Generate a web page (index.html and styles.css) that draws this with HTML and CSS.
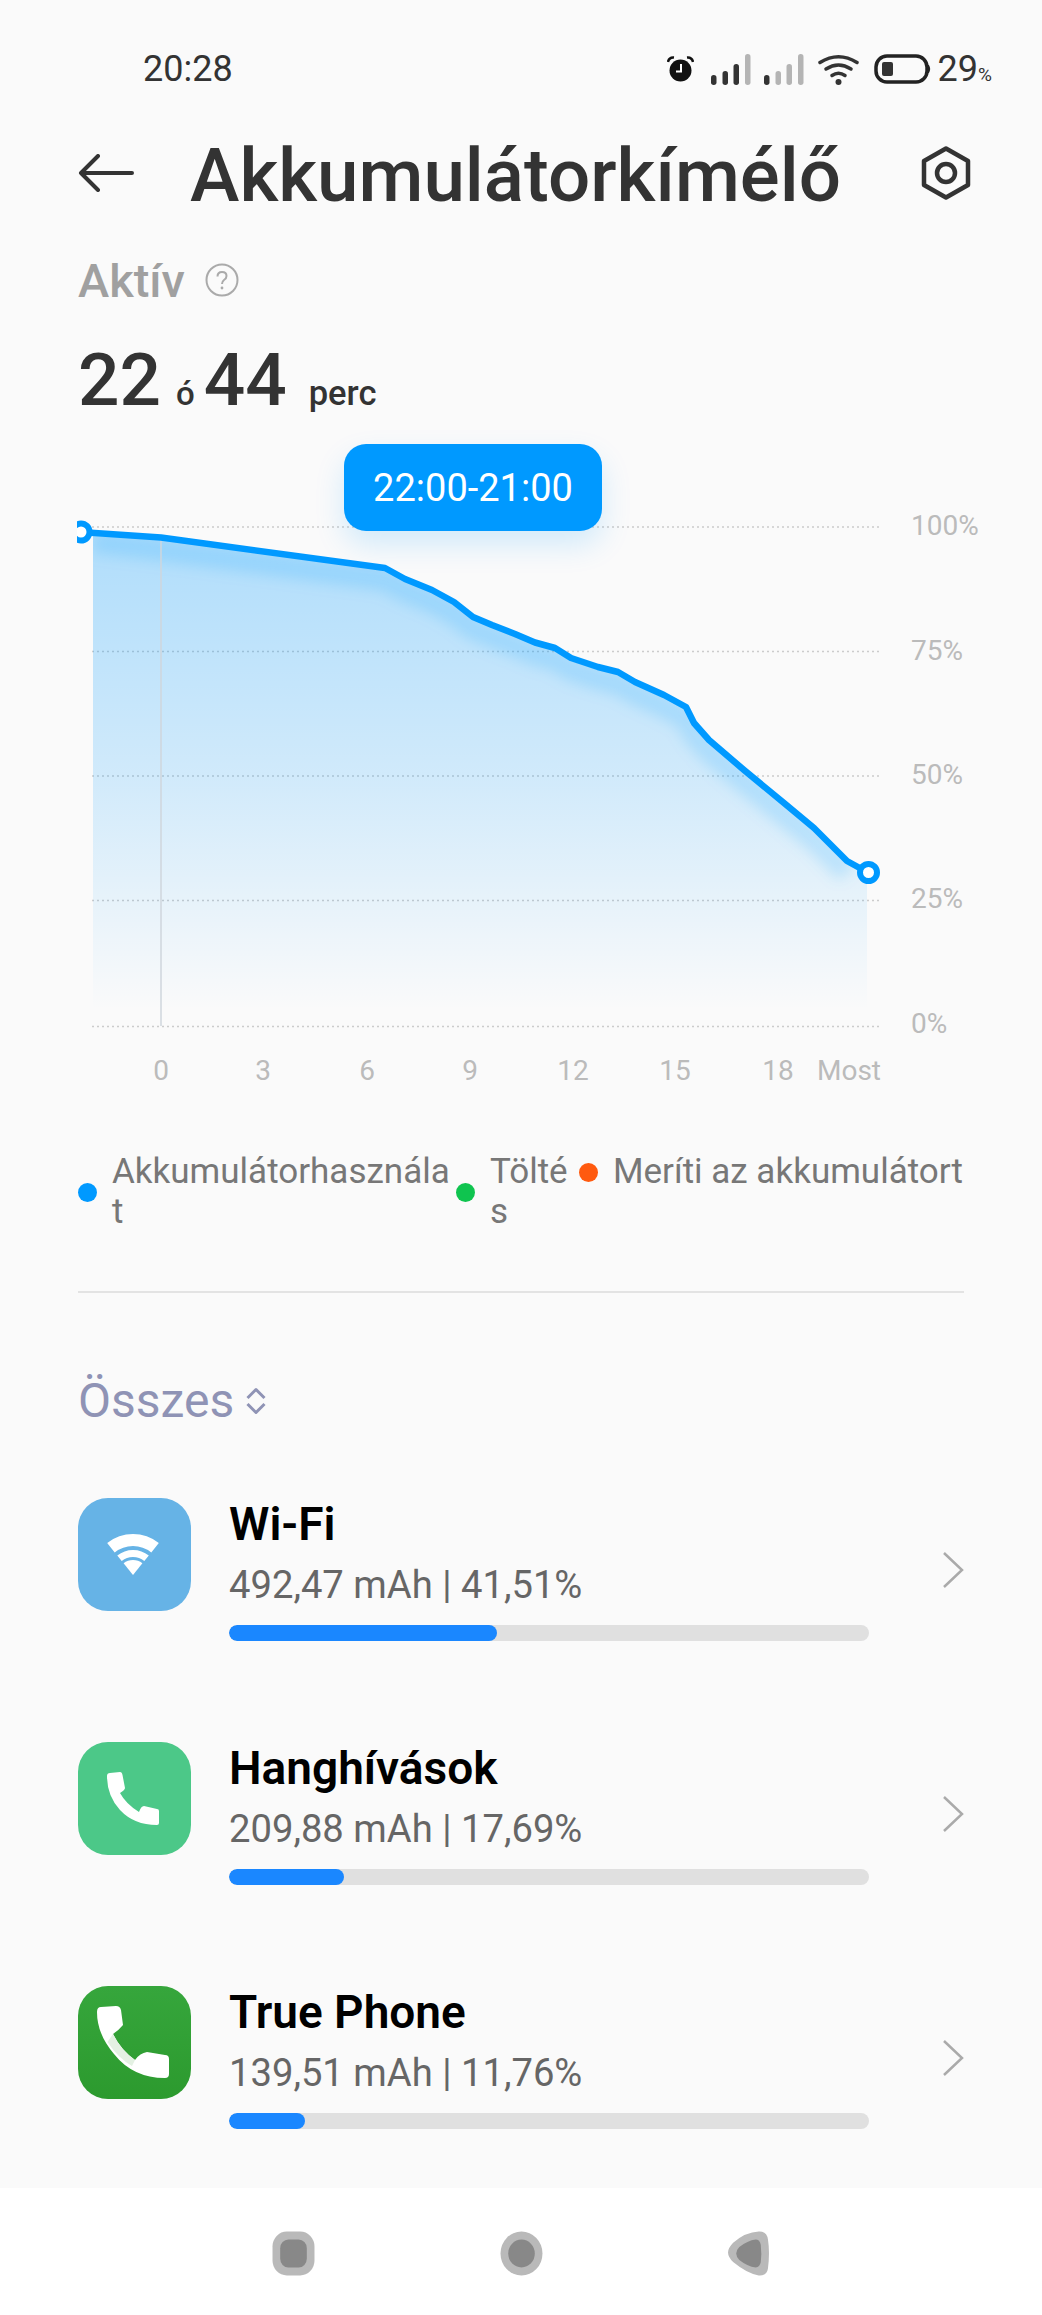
FILE: index.html
```html
<!DOCTYPE html>
<html lang="hu">
<head>
    <meta charset="UTF-8">
    <meta name="viewport" content="width=device-width, initial-scale=1.0">
    <title>Akkumulátorkímélő</title>
    <link rel="stylesheet" href="styles.css">
</head>
<body>

<div class="statusbar">
    <span class="clock">20:28</span>
    <div class="status-icons">
        <svg class="ic-alarm" width="27" height="26" viewBox="0 0 27 26">
            <circle cx="13.5" cy="14.5" r="11" fill="#111"/>
            <path d="M14 8v7.5H9" fill="none" stroke="#fff" stroke-width="2"/>
            <path d="M1 6Q2 1 7 1.500M26 6Q25 1 20 1.500" fill="none" stroke="#111" stroke-width="2.500"/>
        </svg>
        <svg class="ic-signal" width="40" height="31" viewBox="0 0 40 31">
            <rect x="0" y="21" width="5.500" height="10" rx="2.700" fill="#333"/>
            <rect x="11.500" y="17" width="5.500" height="14" rx="2.700" fill="#333"/>
            <rect x="22.500" y="10" width="5.500" height="21" rx="2.700" fill="#333"/>
            <rect x="34" y="0" width="5.500" height="31" rx="2.700" fill="#b4b4b4"/>
        </svg>
        <svg class="ic-signal" width="40" height="31" viewBox="0 0 40 31">
            <rect x="0" y="21" width="5.500" height="10" rx="2.700" fill="#333"/>
            <rect x="11.500" y="17" width="5.500" height="14" rx="2.700" fill="#b4b4b4"/>
            <rect x="22.500" y="10" width="5.500" height="21" rx="2.700" fill="#b4b4b4"/>
            <rect x="34" y="0" width="5.500" height="31" rx="2.700" fill="#b4b4b4"/>
        </svg>
        <svg class="ic-wifi" width="41" height="31" viewBox="0 0 41 31">
            <g fill="none" stroke="#333" stroke-width="3.500" stroke-linecap="round">
                <path d="M2 8.500Q20.500 -3 39 8.500"/>
                <path d="M8 15Q20.500 7 33 15"/>
                <path d="M14 21.500Q20.500 17 27 21.500"/>
            </g>
            <circle cx="20.500" cy="28" r="3" fill="#333"/>
        </svg>
        <svg class="ic-battery" width="58" height="30" viewBox="0 0 58 30">
            <rect x="2" y="2" width="51" height="26" rx="11" fill="none" stroke="#222" stroke-width="3.500"/>
            <rect x="8" y="8" width="11" height="14" rx="2" fill="#333"/>
            <path d="M54.500 11Q57 15 54.500 19Z" fill="#222" stroke="#222"/>
        </svg>
        <span class="batt-text">29<small>%</small></span>
    </div>
</div>

<div class="titlebar">
    <svg class="back" width="56" height="38" viewBox="0 0 56 38">
        <path d="M54 19H3M20 2L3 19L20 36" fill="none" stroke="#333" stroke-width="4" stroke-linecap="round" stroke-linejoin="round"/>
    </svg>
    <h1>Akkumulátorkímélő</h1>
    <svg class="gear" width="50" height="54" viewBox="0 0 50 54">
        <path d="M25 2.500L47 15V39L25 51.500L3 39V15Z" fill="none" stroke="#333" stroke-width="4.500" stroke-linejoin="round"/>
        <circle cx="25" cy="27" r="9" fill="none" stroke="#333" stroke-width="4.500"/>
    </svg>
</div>

<div class="active-row">
    <span class="active-label">Aktív</span>
    <svg width="34" height="34" viewBox="0 0 34 34">
        <circle cx="17" cy="17" r="15.500" fill="none" stroke="#aaa" stroke-width="2"/>
        <path d="M12.500 13.500Q12.500 9 17 9Q21.500 9 21.500 13Q21.500 15.500 19 17Q17 18.500 17 21" fill="none" stroke="#aaa" stroke-width="2"/>
        <circle cx="17" cy="25" r="1.400" fill="#aaa"/>
    </svg>
</div>

<div class="duration">
    <span class="big">22</span><span class="unit unit-h">ó</span><span class="big">44</span><span class="unit unit-m">perc</span>
</div>

<div class="chart">
    <svg class="chart-svg" width="1042" height="660" viewBox="0 430 1042 660">
        <defs>
            <linearGradient id="areaFill" x1="0" y1="530" x2="0" y2="1010" gradientUnits="userSpaceOnUse">
                <stop offset="0" stop-color="#0099ff" stop-opacity="0.30"/>
                <stop offset="0.5" stop-color="#0099ff" stop-opacity="0.17"/>
                <stop offset="1" stop-color="#0099ff" stop-opacity="0"/>
            </linearGradient>
            <clipPath id="areaClip">
                <path d="M93 532L161 537.500L385 568L405 579L432 590L454 602L473 617L492 625L515 634L535 642.500L555 648L571 658L598 667L618 672L635 682L664 695L686 707L694 723L709 740L744 770L784 803L814 828L847 861L867 872V1010H93Z"/>
            </clipPath>
            <clipPath id="dotClip">
                <rect x="77" y="430" width="900" height="660"/>
            </clipPath>
            <filter id="soft" x="-10%" y="-10%" width="120%" height="120%">
                <feGaussianBlur stdDeviation="7"/>
            </filter>
        </defs>
        <g class="grid">
            <path d="M92 527H882"/>
            <path d="M92 651.500H882"/>
            <path d="M92 776H882"/>
            <path d="M92 900.500H882"/>
            <path d="M92 1026.500H882"/>
        </g>
        <path d="M93 532L161 537.500L385 568L405 579L432 590L454 602L473 617L492 625L515 634L535 642.500L555 648L571 658L598 667L618 672L635 682L664 695L686 707L694 723L709 740L744 770L784 803L814 828L847 861L867 872V1010H93Z" fill="url(#areaFill)"/>
        <g clip-path="url(#areaClip)">
            <path d="M93 542L161 550L385 580L405 591L432 602L454 614L473 629L492 637L515 646L535 654.500L555 660L571 670L598 679L618 684L635 694L664 707L686 719L694 735L709 752L744 782L784 815L814 840L847 873" fill="none" stroke="#0099ff" stroke-opacity="0.16" stroke-width="22" filter="url(#soft)"/>
        </g>
        <path d="M161 537V1026" stroke="#cfd6dc" stroke-width="1.500"/>
        <path d="M80 532L161 537.500L385 568L405 579L432 590L454 602L473 617L492 625L515 634L535 642.500L555 648L571 658L598 667L618 672L635 682L664 695L686 707L694 723L709 740L744 770L784 803L814 828L847 861L867 872" fill="none" stroke="#0099ff" stroke-width="6.500" stroke-linejoin="round"/>
        <g clip-path="url(#dotClip)">
            <circle cx="81" cy="532" r="8.500" fill="#fff" stroke="#0099ff" stroke-width="6"/>
        </g>
        <circle cx="868.500" cy="872.500" r="8.500" fill="#fff" stroke="#0099ff" stroke-width="6"/>
        <g class="y-labels">
            <text x="911" y="535">100%</text>
            <text x="911" y="660">75%</text>
            <text x="911" y="784">50%</text>
            <text x="911" y="908">25%</text>
            <text x="911" y="1033">0%</text>
        </g>
        <g class="x-labels">
            <text x="161" y="1080">0</text>
            <text x="263" y="1080">3</text>
            <text x="367" y="1080">6</text>
            <text x="470" y="1080">9</text>
            <text x="573" y="1080">12</text>
            <text x="675" y="1080">15</text>
            <text x="778" y="1080">18</text>
            <text x="849" y="1080">Most</text>
        </g>
    </svg>
    <div class="tooltip">22:00-21:00</div>
</div>

<div class="legend">
    <div class="legend-item item-use"><i class="dot blue"></i><span>Akkumulátorhasználat</span></div>
    <div class="legend-item item-charge"><i class="dot green"></i><span>Töltés</span></div>
    <div class="legend-item item-drain"><i class="dot orange"></i><span>Meríti az akkumulátort</span></div>
</div>

<div class="divider"></div>

<div class="filter">
    <span>Összes</span>
    <svg width="20" height="28" viewBox="0 0 20 28">
        <path d="M1.500 11L10 2.500L18.500 11M1.500 17L10 25.500L18.500 17" fill="none" stroke="#8f93b5" stroke-width="3" stroke-linejoin="round"/>
    </svg>
</div>

<div class="list">
    <div class="row">
        <div class="app-icon icon-wifi">
            <svg width="113" height="113" viewBox="0 0 113 113" fill="#fff">
                <path d="M29.200 45.100A41 41 0 0 1 80.800 45.100L73.300 54.500A29 29 0 0 0 36.700 54.500Z"/>
                <path d="M39.300 57.600A25 25 0 0 1 70.800 57.600L66.300 63A18 18 0 0 0 43.700 63Z"/>
                <path d="M45.600 65.300A15 15 0 0 1 64.400 65.300L55 77Z"/>
            </svg>
        </div>
        <div class="row-body">
            <div class="row-title">Wi-Fi</div>
            <div class="row-sub">492,47 mAh | 41,51%</div>
            <div class="bar"><div class="bar-fill" style="width: 268px"></div></div>
        </div>
        <svg class="chev" width="22" height="36" viewBox="0 0 22 36"><path d="M2 1L20 18L2 35" fill="none" stroke="#aaa" stroke-width="2.500"/></svg>
    </div>
    <div class="row">
        <div class="app-icon icon-voice">
            <svg width="113" height="113" viewBox="0 0 113 113" fill="#fff">
                <path d="M29 34Q29 31 32 31L42 30Q44 30 44.500 33L47 46Q47 48 42 51Q48 62 61 70Q63 64 66 64L79 67Q81 67 81 69L81 81Q81 83 79 83Q56 83 42 68Q29 54 29 34Z"/>
            </svg>
        </div>
        <div class="row-body">
            <div class="row-title">Hanghívások</div>
            <div class="row-sub">209,88 mAh | 17,69%</div>
            <div class="bar"><div class="bar-fill" style="width: 115px"></div></div>
        </div>
        <svg class="chev" width="22" height="36" viewBox="0 0 22 36"><path d="M2 1L20 18L2 35" fill="none" stroke="#aaa" stroke-width="2.500"/></svg>
    </div>
    <div class="row">
        <div class="app-icon icon-phone">
            <svg width="113" height="113" viewBox="0 0 113 113">
                <path fill="#fff" d="M19 26Q19 21 23 21L38 20Q42 20 43 24L45 39Q40 45 35 48Q43 64 57 74Q62 67 69 66L87 69Q91 69 91 73L91 88Q91 92 87 92Q55 92 36 68Q19 48 19 26Z"/>
                <path fill="#e4f1e3" d="M29.500 56L35 48Q43 64 57 74L54 80Q40 72 29.500 56Z"/>
            </svg>
        </div>
        <div class="row-body">
            <div class="row-title">True Phone</div>
            <div class="row-sub">139,51 mAh | 11,76%</div>
            <div class="bar"><div class="bar-fill" style="width: 76px"></div></div>
        </div>
        <svg class="chev" width="22" height="36" viewBox="0 0 22 36"><path d="M2 1L20 18L2 35" fill="none" stroke="#aaa" stroke-width="2.500"/></svg>
    </div>
</div>

<div class="navbar">
    <svg width="43" height="45" viewBox="0 0 42 42" preserveAspectRatio="none">
        <rect x="0.500" y="0.500" width="41" height="41" rx="14" fill="#b9b9b9"/>
        <rect x="8" y="8" width="26" height="26" rx="8" fill="#888"/>
    </svg>
    <svg width="43" height="45" viewBox="0 0 42 42" preserveAspectRatio="none">
        <circle cx="21" cy="21" r="20.500" fill="#b9b9b9"/>
        <circle cx="21" cy="21" r="13" fill="#888"/>
    </svg>
    <svg width="43" height="45" viewBox="0 0 42 42" preserveAspectRatio="none">
        <path d="M1 20Q1 16 6 11Q18 1 31 0.500Q39 0 40 8Q42 20 40 35Q39 42 31 41.500Q20 40 6 29Q1 24 1 20Z" fill="#b9b9b9"/>
        <path d="M9 21Q9 18 12 15Q20 9 28 8Q32 8 33 13Q34 21 33 29Q32 34 28 34Q20 33 12 27Q9 24 9 21Z" fill="#888"/>
    </svg>
</div>

</body>
</html>
```

FILE: styles.css
```css
body {
    font-family: Roboto, "Noto Sans", sans-serif;
    background-color: #fafafa;
    color: #333;
    margin: 0;
    padding: 0;
    width: 1042px;
    height: 2315px;
    overflow: hidden;
    display: flex;
    flex-direction: column;
}
.statusbar {
    height: 52px;
    margin-top: 43px;
    padding: 0 50px 0 143px;
    display: flex;
    justify-content: space-between;
    align-items: center;
}
.clock {
    font-size: 36px;
}
.status-icons {
    display: flex;
    align-items: center;
}
.ic-alarm {
    margin-right: 17px;
}
.ic-signal {
    margin-right: 13px;
}
.ic-wifi {
    margin-left: 1px;
    margin-right: 15px;
}
.ic-battery {
    margin-right: 6px;
}
.batt-text {
    font-size: 36px;
}
.batt-text small {
    font-size: 19px;
}
.titlebar {
    height: 100px;
    margin-top: 28px;
    padding: 0 71px 0 78px;
    display: flex;
    align-items: center;
}
.titlebar h1 {
    flex: 1;
    margin: 4px 0 0 56px;
    font-size: 74.500px;
    font-weight: 500;
    white-space: nowrap;
}
.active-row {
    height: 50px;
    margin-top: 32px;
    padding-left: 78px;
    display: flex;
    align-items: center;
    gap: 20px;
}
.active-label {
    font-size: 47px;
    font-weight: 500;
    color: #a0a0a0;
}
.duration {
    height: 80px;
    margin-top: 32px;
    padding-left: 78px;
    display: flex;
    align-items: baseline;
}
.big {
    font-size: 73px;
    font-weight: 500;
}
.unit {
    font-weight: 500;
}
.unit-h {
    font-size: 33px;
    margin: 0 9px 0 15px;
}
.unit-m {
    font-size: 34.500px;
    margin-left: 22px;
}
.chart {
    position: relative;
    height: 660px;
    margin-top: 13px;
}
.chart-svg {
    display: block;
}
.grid path {
    fill: none;
    stroke: #ccc;
    stroke-width: 1.5;
    stroke-dasharray: 2 3;
}
.y-labels text,
.x-labels text {
    font-size: 28px;
    fill: #bbb;
}
.x-labels text {
    text-anchor: middle;
}
.tooltip {
    position: absolute;
    left: 344px;
    top: 14px;
    width: 258px;
    height: 87px;
    border-radius: 22px;
    background-color: #0099ff;
    box-shadow: 0 14px 30px rgba(0, 153, 255, 0.16);
    color: #fff;
    font-size: 38px;
    display: flex;
    align-items: center;
    justify-content: center;
}
.legend {
    margin-top: 62px;
    padding-left: 78px;
    height: 80px;
    display: flex;
    align-items: flex-start;
    font-size: 35px;
    line-height: 40px;
    color: #777;
}
.legend-item {
    display: flex;
    align-items: center;
    gap: 15px;
}
.legend-item span {
    word-break: break-all;
}
.item-use span {
    width: 340px;
}
.item-charge {
    margin-left: 4px;
}
.item-charge span {
    width: 80px;
}
.item-drain {
    margin-left: 9px;
}
.item-drain span {
    white-space: nowrap;
}
.dot {
    width: 19px;
    height: 19px;
    border-radius: 50%;
    flex: none;
}
.blue {
    background-color: #0099ff;
}
.green {
    background-color: #0fc44f;
}
.orange {
    background-color: #ff5a0f;
}
.divider {
    height: 2px;
    margin: 59px 78px 0;
    background-color: #e3e3e3;
}
.filter {
    margin-top: 79px;
    padding-left: 78px;
    display: flex;
    align-items: center;
    gap: 12px;
    font-size: 48px;
    color: #8f93b5;
}
.list {
    margin-top: 69px;
    padding: 0 78px;
    display: flex;
    flex-direction: column;
    gap: 94px;
}
.row {
    height: 150px;
    display: flex;
    position: relative;
}
.app-icon {
    width: 113px;
    height: 113px;
    border-radius: 30px;
    flex: none;
}
.icon-wifi {
    background-color: #66b3e6;
}
.icon-voice {
    background-color: #4cc888;
}
.icon-phone {
    background: linear-gradient(#36a63c, #2c9a2e);
}
.row-body {
    margin-left: 38px;
    width: 640px;
}
.row-title {
    font-size: 46px;
    font-weight: 600;
    color: #000;
    line-height: 52px;
}
.row-sub {
    margin-top: 13px;
    font-size: 38.200px;
    color: #666;
    line-height: 44px;
}
.bar {
    height: 16px;
    margin-top: 18px;
    border-radius: 8px;
    background-color: #e0e0e0;
    overflow: hidden;
}
.bar-fill {
    height: 100%;
    border-radius: 8px;
    background-color: #1a87ff;
}
.chev {
    margin: 54px 0 0 73px;
    flex: none;
}
.navbar {
    position: absolute;
    left: 0;
    right: 0;
    top: 2188px;
    height: 127px;
    background-color: #fff;
    padding-top: 43px;
    box-sizing: border-box;
    display: flex;
    align-items: flex-start;
}
.navbar svg:nth-child(1) {
    margin-left: 272px;
}
.navbar svg:nth-child(2) {
    margin-left: 185px;
}
.navbar svg:nth-child(3) {
    margin-left: 184px;
}
```
